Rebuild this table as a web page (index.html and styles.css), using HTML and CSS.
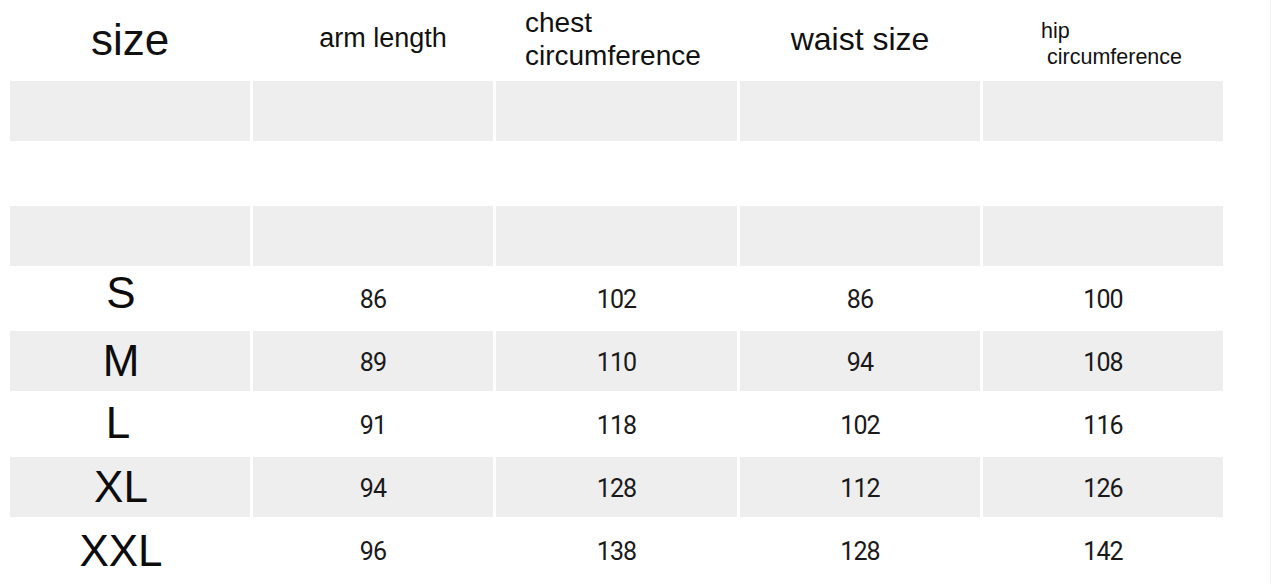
FILE: index.html
```html
<!DOCTYPE html>
<html lang="en">
<head>
<meta charset="utf-8">
<title>Size chart</title>
<link rel="stylesheet" href="styles.css">
</head>
<body>
<div class="page">
  <div class="chart">
    <div class="cell head head-size">size</div>
    <div class="cell head head-arm">arm length</div>
    <div class="cell head head-chest"><span>chest</span><span>circumference</span></div>
    <div class="cell head head-waist">waist size</div>
    <div class="cell head head-hip"><span>hip</span><span class="indent">circumference</span></div>

    <div class="cell shade"></div><div class="cell shade"></div><div class="cell shade"></div><div class="cell shade"></div><div class="cell shade"></div>
    <div class="cell"></div><div class="cell"></div><div class="cell"></div><div class="cell"></div><div class="cell"></div>
    <div class="cell shade"></div><div class="cell shade"></div><div class="cell shade"></div><div class="cell shade"></div><div class="cell shade"></div>

    <div class="cell label label-s">S</div><div class="cell num">86</div><div class="cell num">102</div><div class="cell num">86</div><div class="cell num">100</div>
    <div class="cell shade label">M</div><div class="cell shade num">89</div><div class="cell shade num">110</div><div class="cell shade num">94</div><div class="cell shade num">108</div>
    <div class="cell label label-l">L</div><div class="cell num">91</div><div class="cell num">118</div><div class="cell num">102</div><div class="cell num">116</div>
    <div class="cell shade label">XL</div><div class="cell shade num">94</div><div class="cell shade num">128</div><div class="cell shade num">112</div><div class="cell shade num">126</div>
    <div class="cell label">XXL</div><div class="cell num">96</div><div class="cell num">138</div><div class="cell num">128</div><div class="cell num">142</div>
  </div>
</div>
</body>
</html>
```

FILE: styles.css
```css
html, body {
  margin: 0;
  padding: 0;
  background: #ffffff;
}

body {
  font-family: "Liberation Sans", Arial, sans-serif;
  color: #111111;
  height: 584px;
  overflow: hidden;
}

.page {
  width: 1271px;
  height: 584px;
  border-right: 1px solid #f1f1f1;
  padding-left: 10px;
  box-sizing: border-box;
}

.chart {
  display: grid;
  grid-template-columns: 240px 240px 241px 240px 240px;
  grid-template-rows: 81px 60px 65px 60px 65px 60px 66px 60px 67px;
  column-gap: 3px;
}

.cell {
  display: flex;
  align-items: center;
  justify-content: center;
  line-height: 1;
}

.shade {
  background: #eeeeee;
}

.head {
  align-items: flex-start;
  color: #111111;
}

.head-size {
  font-size: 44px;
  padding-top: 18px;
}

.head-arm {
  font-size: 27px;
  padding-top: 25px;
  padding-left: 20px;
}

.head-chest {
  flex-direction: column;
  justify-content: flex-start;
  align-items: flex-start;
  font-size: 28px;
  line-height: 33px;
  padding-top: 6px;
  padding-left: 29px;
}

.head-waist {
  font-size: 32px;
  padding-top: 23px;
}

.head-hip {
  flex-direction: column;
  justify-content: flex-start;
  align-items: flex-start;
  font-size: 21.5px;
  line-height: 26px;
  padding-top: 18px;
  padding-left: 58px;
}

.head-hip .indent {
  padding-left: 6px;
}

.label {
  font-size: 44px;
  padding-right: 18px;
  color: #0c0c0c;
}

.label-s {
  padding-bottom: 12px;
}

.label-l {
  padding-right: 24px;
  padding-bottom: 2px;
}

.num {
  font-family: "Roboto", "Liberation Sans", sans-serif;
  font-size: 25px;
  letter-spacing: -0.9px;
  color: #1a1a1a;
  padding-top: 2px;
}
```
